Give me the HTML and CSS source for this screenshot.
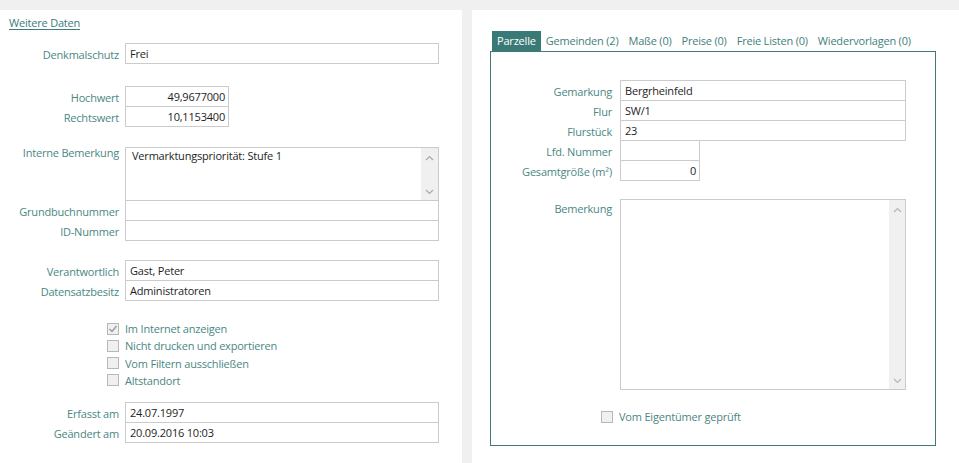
FILE: index.html
```html
<!DOCTYPE html>
<html lang="de">
<head>
<meta charset="utf-8">
<title>Weitere Daten</title>
<link rel="stylesheet" href="styles.css">
</head>
<body>
<div class="page">
  <section class="left">
    <div class="more-wrap"><a class="more" href="#">Weitere Daten</a></div>

    <div class="group g1">
      <div class="row"><span class="lbl">Denkmalschutz</span><span class="fld w-full">Frei</span></div>
    </div>

    <div class="group g2">
      <div class="row"><span class="lbl">Hochwert</span><span class="fld w-num">49,9677000</span></div>
      <div class="row"><span class="lbl">Rechtswert</span><span class="fld w-num">10,1153400</span></div>
    </div>

    <div class="group g3">
      <div class="row tall">
        <span class="lbl lbl-top">Interne Bemerkung</span>
        <div class="fld area area-left">
          <div class="area-text">Vermarktungspriorität: Stufe 1</div>
          <div class="sb">
            <svg width="9" height="6" viewBox="0 0 9 6"><polyline points="1,5 4.5,1.5 8,5" fill="none" stroke="#a9a9a9" stroke-width="1.2"/></svg>
            <svg width="9" height="6" viewBox="0 0 9 6"><polyline points="1,1 4.5,4.5 8,1" fill="none" stroke="#a9a9a9" stroke-width="1.2"/></svg>
          </div>
        </div>
      </div>
      <div class="row"><span class="lbl">Grundbuchnummer</span><span class="fld w-full"></span></div>
      <div class="row"><span class="lbl">ID-Nummer</span><span class="fld w-full"></span></div>
    </div>

    <div class="group g4">
      <div class="row"><span class="lbl">Verantwortlich</span><span class="fld w-full">Gast, Peter</span></div>
      <div class="row"><span class="lbl">Datensatzbesitz</span><span class="fld w-full">Administratoren</span></div>
    </div>

    <div class="checks">
      <div class="chk"><span class="box"><svg width="10" height="10" viewBox="0 0 10 10"><polyline points="1.5,5 4,7.5 8.5,2" fill="none" stroke="#9a9a9a" stroke-width="1.4"/></svg></span><span class="chk-lbl">Im Internet anzeigen</span></div>
      <div class="chk"><span class="box"></span><span class="chk-lbl">Nicht drucken und exportieren</span></div>
      <div class="chk"><span class="box"></span><span class="chk-lbl">Vom Filtern ausschließen</span></div>
      <div class="chk"><span class="box"></span><span class="chk-lbl">Altstandort</span></div>
    </div>

    <div class="group g5">
      <div class="row"><span class="lbl">Erfasst am</span><span class="fld w-full">24.07.1997</span></div>
      <div class="row"><span class="lbl">Geändert am</span><span class="fld w-full">20.09.2016 10:03</span></div>
    </div>
  </section>

  <section class="right">
    <div class="tabs">
      <span class="tab active">Parzelle</span>
      <span class="tab">Gemeinden (2)</span>
      <span class="tab">Maße (0)</span>
      <span class="tab">Preise (0)</span>
      <span class="tab">Freie Listen (0)</span>
      <span class="tab">Wiedervorlagen (0)</span>
    </div>
    <div class="tabpanel">
      <div class="group">
        <div class="row"><span class="lbl rl">Gemarkung</span><span class="fld w-r">Bergrheinfeld</span></div>
        <div class="row"><span class="lbl rl">Flur</span><span class="fld w-r">SW/1</span></div>
        <div class="row"><span class="lbl rl">Flurstück</span><span class="fld w-r">23</span></div>
        <div class="row"><span class="lbl rl">Lfd. Nummer</span><span class="fld w-rs"></span></div>
        <div class="row"><span class="lbl rl">Gesamtgröße (m²)</span><span class="fld w-rs num">0</span></div>
      </div>
      <div class="group rg2">
        <div class="row tall">
          <span class="lbl rl lbl-top2">Bemerkung</span>
          <div class="fld area area-right">
            <div class="area-text"></div>
            <div class="sb sb-r">
              <svg width="9" height="6" viewBox="0 0 9 6"><polyline points="1,5 4.5,1.5 8,5" fill="none" stroke="#b5b5b5" stroke-width="1.2"/></svg>
              <svg width="9" height="6" viewBox="0 0 9 6"><polyline points="1,1 4.5,4.5 8,1" fill="none" stroke="#b5b5b5" stroke-width="1.2"/></svg>
            </div>
          </div>
        </div>
      </div>
      <div class="chk rchk"><span class="box"></span><span class="chk-lbl">Vom Eigentümer geprüft</span></div>
    </div>
  </section>
</div>
</body>
</html>
```

FILE: styles.css
```css
* { box-sizing: border-box; }

html, body {
  margin: 0;
  padding: 0;
}

body {
  background: #f0f0f0;
  font-family: "Open Sans", "Noto Sans", "DejaVu Sans", sans-serif;
  font-size: 11px;
  letter-spacing: -0.2px;
  color: #1e1e1e;
  width: 959px;
  height: 463px;
  overflow: hidden;
}

.page {
  display: flex;
  gap: 10px;
  padding-top: 10px;
  height: 463px;
}

.left {
  width: 462px;
  background: #fff;
}

.right {
  flex: 1;
  background: #fff;
  padding: 21px 0 0 18px;
}

.more-wrap {
  padding: 5px 0 0 9px;
  line-height: 16px;
}

.more {
  color: #3c7c79;
  text-decoration: underline;
  text-underline-offset: 2px;
}

.group { display: flex; flex-direction: column; }
.g1 { margin-top: 12px; }
.g2 { margin-top: 22px; }
.g3 { margin-top: 20px; }
.g4 { margin-top: 19px; }
.g5 { margin-top: 13px; }

.row {
  display: flex;
  align-items: center;
  height: 21px;
}
.row + .row { margin-top: -1px; }
.row.tall { height: auto; align-items: flex-start; }

.lbl {
  width: 125px;
  padding-right: 6px;
  text-align: right;
  color: #4a8784;
  white-space: nowrap;
  line-height: 19px;
  padding-top: 2px;
}
.lbl-top { line-height: 14px; margin-top: -1px; padding-top: 0; }

.fld {
  height: 21px;
  border: 1px solid #cbcbcb;
  padding: 0 4px;
  line-height: 19px;
  background: #fff;
  white-space: nowrap;
}
.w-full { width: 314px; }
.w-num { width: 104px; text-align: right; padding-right: 3px; }

.area {
  display: flex;
  padding: 0;
}
.area-left { width: 314px; height: 54px; }
.area-text {
  flex: 1;
  padding: 1px 0 0 6px;
  line-height: 14px;
}
.sb {
  width: 17px;
  background: #f0f0f0;
  display: flex;
  flex-direction: column;
  align-items: center;
  justify-content: space-between;
  padding: 7px 0 5px;
}
.sb svg { display: block; }
.sb-r { width: 16px; }

.checks {
  margin-top: 19px;
  padding-left: 107px;
}
.chk {
  display: flex;
  align-items: center;
  gap: 6px;
  height: 17.25px;
}
.box {
  width: 12px;
  height: 12px;
  border: 1px solid #b8b8b8;
  background: #f0f0f0;
  display: flex;
  align-items: center;
  justify-content: center;
}
.box svg { display: block; }
.chk-lbl { color: #4a8784; }

/* right side */
.tabs {
  display: flex;
  margin-left: 2px;
  height: 20px;
}
.tab {
  padding: 0 5px;
  line-height: 20px;
  color: #3f7f7c;
  white-space: nowrap;
}
.tab.active {
  background: #3a7a76;
  color: #fff;
}

.tabpanel {
  width: 446px;
  height: 395px;
  border: 1px solid #3f7a77;
  padding-top: 28px;
}

.rl { width: 129px; padding-right: 8px; }
.w-r { width: 286px; }
.w-rs { width: 80px; }
.num { text-align: right; padding-right: 3px; }

.rg2 { margin-top: 18px; }
.lbl-top2 { line-height: 14px; padding-top: 3px; }
.area-right { width: 286px; height: 191px; }

.rchk {
  margin-top: 18px;
  padding-left: 110px;
  height: 17px;
}
```
